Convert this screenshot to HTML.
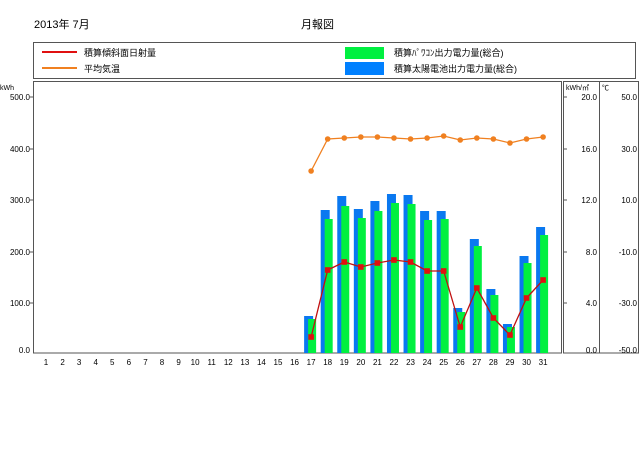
<!DOCTYPE html>
<html><head><meta charset="utf-8"><style>
html,body{margin:0;padding:0;background:#fff;}
svg{display:block;font-family:"Liberation Sans","Noto Sans CJK JP",sans-serif;}
</style></head><body>
<svg id="s" width="640" height="452" viewBox="0 0 640 452" xmlns="http://www.w3.org/2000/svg">
<text x="34" y="28" font-size="11">2013年 7月</text>
<text x="301" y="28" font-size="11">月報図</text>
<rect x="33.5" y="42.5" width="602" height="36" fill="none" stroke="#555"/>
<line x1="42" y1="52" x2="77" y2="52" stroke="#e01010" stroke-width="2"/>
<line x1="42" y1="68" x2="77" y2="68" stroke="#f08020" stroke-width="2"/>
<text x="84" y="56" font-size="9">積算傾斜面日射量</text>
<text x="84" y="72" font-size="9">平均気温</text>
<rect x="345" y="47" width="39" height="12" fill="#00f040"/>
<rect x="345" y="62" width="39" height="13" fill="#0080ff"/>
<text x="394" y="56" font-size="9">積算ﾊﾟﾜｺﾝ出力電力量(総合)</text>
<text x="394" y="72" font-size="9">積算太陽電池出力電力量(総合)</text>
<rect x="33.5" y="81.5" width="528" height="271.5" fill="none" stroke="#555"/>
<rect x="563.5" y="81.5" width="36" height="271.5" fill="none" stroke="#555"/>
<rect x="599.5" y="81.5" width="39" height="271.5" fill="none" stroke="#555"/>
<g font-size="8" text-anchor="end">
<text x="14" y="90" font-size="7">kWh</text>
<text x="30" y="100">500.0</text><text x="30" y="152">400.0</text><text x="30" y="203">300.0</text>
<text x="30" y="255">200.0</text><text x="30" y="306">100.0</text><text x="30" y="353">0.0</text>
<text x="597" y="100">20.0</text><text x="597" y="152">16.0</text><text x="597" y="203">12.0</text>
<text x="597" y="255">8.0</text><text x="597" y="306">4.0</text><text x="597" y="353">0.0</text>
<text x="637" y="100">50.0</text><text x="637" y="152">30.0</text><text x="637" y="203">10.0</text>
<text x="637" y="255">-10.0</text><text x="637" y="306">-30.0</text><text x="637" y="353">-50.0</text>
</g>
<text x="566" y="90" font-size="7">kWh/㎡</text>
<text x="602" y="90" font-size="7">℃</text>
<g stroke="#555">
<line x1="30" y1="97" x2="33" y2="97"/><line x1="30" y1="149" x2="33" y2="149"/><line x1="30" y1="200" x2="33" y2="200"/><line x1="30" y1="252" x2="33" y2="252"/><line x1="30" y1="303" x2="33" y2="303"/>
<line x1="564" y1="97" x2="567" y2="97"/><line x1="564" y1="149" x2="567" y2="149"/><line x1="564" y1="200" x2="567" y2="200"/><line x1="564" y1="252" x2="567" y2="252"/><line x1="564" y1="303" x2="567" y2="303"/>
</g>
<g id="days" font-size="8" text-anchor="middle"></g>
</svg>
<script>
var ns="http://www.w3.org/2000/svg",s=document.getElementById('s');
function c(d){return 46+(d-1)*16.57;}
function el(tag,attrs,parent){var e=document.createElementNS(ns,tag);for(var k in attrs)e.setAttribute(k,attrs[k]);(parent||s).appendChild(e);return e;}
var days=document.getElementById('days');
for(var d=1;d<=31;d++){var t=el('text',{x:c(d),y:365},days);t.textContent=d;}
var blue=[316,210,196,209,201,194,195,211,211,308,239,289,324,256,227];
var green=[319,219,206,218,211,203,204,220,219,312,246,295,327,263,235];
var red=[337,270,262,267,263,260,262,271,271,327,288,318,335,298,280];
var org=[171,139,138,137,137,138,139,138,136,140,138,139,143,139,137];
var rp='',op='';
for(var i=0;i<15;i++){var x=c(17+i);
el('rect',{x:x-7,y:blue[i],width:9,height:353-blue[i],fill:'#0a78f0'});
el('rect',{x:x-3,y:green[i],width:8,height:353-green[i],fill:'#00f040'});
rp+=(i?'L':'M')+x+' '+red[i];op+=(i?'L':'M')+x+' '+org[i];}
el('path',{d:op,fill:'none',stroke:'#f08020','stroke-width':1.3});
el('path',{d:rp,fill:'none',stroke:'#c01010','stroke-width':1.3});
for(var i=0;i<15;i++){var x=c(17+i);
el('circle',{cx:x,cy:org[i],r:2.8,fill:'#f08020'});
el('rect',{x:x-2.8,y:red[i]-2.8,width:5.6,height:5.6,fill:'#e01010'});}
</script>
</body></html>
